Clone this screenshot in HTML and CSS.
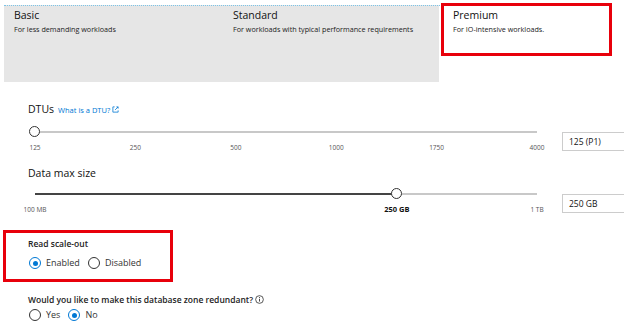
FILE: index.html
```html
<!DOCTYPE html>
<html lang="en">
<head>
  <meta charset="UTF-8" />
  <title>Configure database</title>
  <link rel="stylesheet" href="styles.css">
</head>
<body>
  <!-- Tiers -->
  <div class="tiers">
    <div class="tiers-gray">
      <div class="tier tier-basic">
        <div class="tier-title">Basic</div>
        <div class="tier-desc">For less demanding workloads</div>
      </div>
      <div class="tier tier-standard">
        <div class="tier-title">Standard</div>
        <div class="tier-desc">For workloads with typical performance requirements</div>
      </div>
    </div>
    <div class="tier tier-premium">
      <div class="tier-title">Premium</div>
      <div class="tier-desc">For IO-intensive workloads.</div>
    </div>
  </div>

  <!-- DTUs -->
  <div class="section section-dtu">
    <div class="label-row">
      <span class="big-label">DTUs</span>
      <a href="#" class="help-link">What is a DTU?
        <svg width="7" height="7" viewBox="0 0 8 8"><path d="M3 1H1v6h6V5M5 1h2v2M7 1L3.5 4.5" fill="none" stroke="#0078d4" stroke-width="0.9"/></svg>
      </a>
    </div>
    <div class="slider-row">
      <div class="slider">
        <div class="track"><div class="fill" style="width:0%"></div></div>
        <div class="thumb" style="left:0%"></div>
        <div class="ticks">
          <span>125</span><span>250</span><span>500</span><span>1000</span><span>1750</span><span>4000</span>
        </div>
      </div>
      <div class="value-box">125 (P1)</div>
    </div>
  </div>

  <!-- Data max size -->
  <div class="section section-size">
    <div class="label-row">
      <span class="big-label">Data max size</span>
    </div>
    <div class="slider-row">
      <div class="slider">
        <div class="track"><div class="fill" style="width:72.1%"></div></div>
        <div class="thumb" style="left:72.1%"></div>
        <div class="ticks size-ticks">
          <span>100 MB</span>
          <span class="t-cur" style="left:72.1%">250 GB</span>
          <span>1 TB</span>
        </div>
      </div>
      <div class="value-box">250 GB</div>
    </div>
  </div>

  <!-- Read scale-out -->
  <div class="scale-box">
    <div class="small-label">Read scale-out</div>
    <div class="radio-row">
      <label class="radio checked"><span class="dot"></span>Enabled</label>
      <label class="radio"><span class="dot"></span>Disabled</label>
    </div>
  </div>

  <!-- Zone redundancy -->
  <div class="zone">
    <div class="small-label">Would you like to make this database zone redundant?
      <svg class="info" width="9" height="9" viewBox="0 0 10 10"><circle cx="5" cy="5" r="4.3" fill="none" stroke="#333" stroke-width="0.9"/><path d="M5 4.3v3" stroke="#333" stroke-width="1"/><circle cx="5" cy="2.9" r="0.6" fill="#333"/></svg>
    </div>
    <div class="radio-row zone-radios">
      <label class="radio"><span class="dot"></span>Yes</label>
      <label class="radio checked"><span class="dot"></span>No</label>
    </div>
  </div>
</body>
</html>
```

FILE: styles.css
```css
body {
  margin: 0;
  font-family: 'Open Sans', 'Noto Sans', sans-serif;
  color: #222;
  background: #fff;
  width: 624px;
  height: 331px;
  overflow: hidden;
}
/* Tiers */
.tiers {
  display: flex;
  align-items: flex-start;
  padding: 3px 0 0 4px;
  position: relative;
}
.tiers::before {
  content: '';
  position: absolute;
  top: 5px;
  left: 4px;
  width: 606px;
  border-top: 1px dotted #7cc4e8;
}
.tiers-gray {
  display: flex;
  background: #e6e6e6;
  height: 77px;
  margin-top: 2px;
  width: 435px;
}
.tier-basic {
  width: 206px;
  padding: 2px 0 0 10px;
}
.tier-standard {
  padding: 2px 0 0 13px;
}
.tier-title {
  font-size: 10.5px;
  line-height: 16px;
  color: #111;
}
.tier-desc {
  font-size: 7.2px;
  line-height: 12px;
  color: #222;
}
.tier-premium {
  margin-left: 2px;
  width: 156px;
  height: 46px;
  border: 3px solid #e8000b;
  background: #fff;
  padding: 1px 0 0 9px;
  position: relative;
}
/* Sliders */
.section {
  padding-left: 28px;
}
.section-dtu {
  margin-top: 20px;
}
.section-size {
  margin-top: 14px;
}
.label-row {
  display: flex;
  align-items: baseline;
  gap: 4px;
  height: 16px;
}
.big-label {
  font-size: 10.5px;
  color: #111;
}
.help-link {
  font-size: 7.5px;
  color: #0078d4;
  text-decoration: none;
}
.slider-row {
  display: flex;
  align-items: flex-start;
  gap: 25px;
  margin-top: 13px;
}
.section-size .slider-row {
  margin-top: 11px;
}
.slider {
  position: relative;
  flex: none;
  width: 502px;
  margin-left: 7px;
}
.track {
  height: 2px;
  background: #c8c8c8;
}
.fill {
  height: 2px;
  background: #444;
}
.thumb {
  position: absolute;
  top: -5px;
  width: 9px;
  height: 9px;
  margin-left: -6px;
  border: 1.5px solid #333;
  border-radius: 50%;
  background: #fff;
}
.ticks {
  display: flex;
  justify-content: space-between;
  position: relative;
  margin-top: 10px;
  font-size: 6.5px;
  line-height: 9px;
  color: #555;
}
.ticks span {
  width: 0;
  display: flex;
  justify-content: center;
  white-space: nowrap;
}
.ticks .t-cur {
  position: absolute;
  top: 0;
  font-weight: 700;
  font-size: 7.5px;
  color: #111;
}
.value-box {
  flex: none;
  width: 70px;
  height: 17px;
  border: 1px solid #ccc;
  font-size: 8.5px;
  line-height: 17px;
  padding-left: 6px;
  margin-top: 1px;
  color: #111;
}
/* Read scale-out */
.scale-box {
  margin: 16px 0 0 3px;
  width: 142px;
  height: 46px;
  border: 3px solid #e8000b;
  padding-left: 22px;
}
.small-label {
  font-size: 8.5px;
  font-weight: 600;
  color: #222;
  line-height: 12px;
}
.scale-box .small-label {
  margin-top: 5px;
}
.radio-row {
  display: flex;
  gap: 8px;
  margin-top: 7px;
  margin-left: 1px;
}
.radio {
  display: flex;
  align-items: center;
  gap: 5px;
  font-size: 9px;
  line-height: 12px;
  color: #333;
}
.dot {
  width: 10px;
  height: 10px;
  border: 1px solid #333;
  border-radius: 50%;
  position: relative;
}
.radio.checked .dot {
  border-color: #0078d4;
}
.radio.checked .dot::after {
  content: '';
  position: absolute;
  left: 2.5px;
  top: 2.5px;
  width: 5px;
  height: 5px;
  border-radius: 50%;
  background: #0078d4;
}
.zone {
  padding-left: 28px;
  margin-top: 12px;
}
.info {
  vertical-align: -1px;
}
.zone-radios {
  margin-top: 3px;
}
```
